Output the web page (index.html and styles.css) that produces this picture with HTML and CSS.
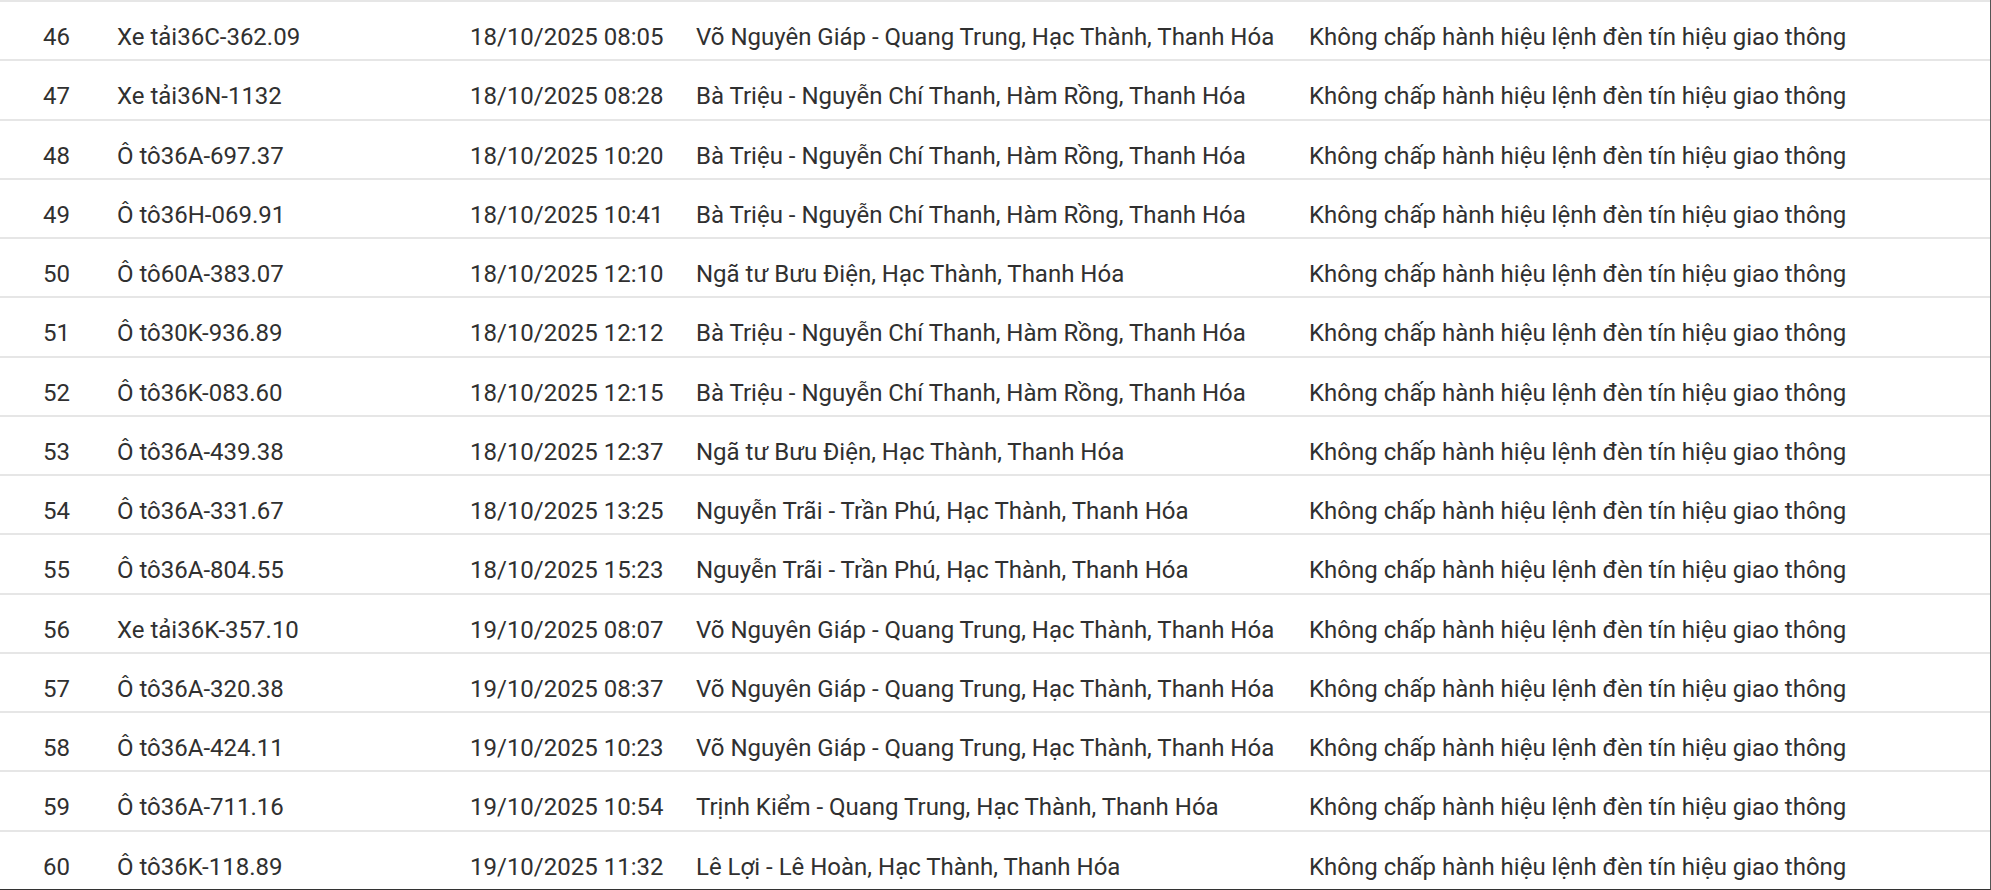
FILE: index.html
```html
<!DOCTYPE html>
<html lang="vi">
<head>
<meta charset="utf-8">
<link rel="stylesheet" href="styles.css">
</head>
<body>
<div class="table">
  <div class="row"><span>46</span><span>Xe tải36C-362.09</span><span>18/10/2025 08:05</span><span>Võ Nguyên Giáp - Quang Trung, Hạc Thành, Thanh Hóa</span><span>Không chấp hành hiệu lệnh đèn tín hiệu giao thông</span></div>
  <div class="row"><span>47</span><span>Xe tải36N-1132</span><span>18/10/2025 08:28</span><span>Bà Triệu - Nguyễn Chí Thanh, Hàm Rồng, Thanh Hóa</span><span>Không chấp hành hiệu lệnh đèn tín hiệu giao thông</span></div>
  <div class="row"><span>48</span><span>Ô tô36A-697.37</span><span>18/10/2025 10:20</span><span>Bà Triệu - Nguyễn Chí Thanh, Hàm Rồng, Thanh Hóa</span><span>Không chấp hành hiệu lệnh đèn tín hiệu giao thông</span></div>
  <div class="row"><span>49</span><span>Ô tô36H-069.91</span><span>18/10/2025 10:41</span><span>Bà Triệu - Nguyễn Chí Thanh, Hàm Rồng, Thanh Hóa</span><span>Không chấp hành hiệu lệnh đèn tín hiệu giao thông</span></div>
  <div class="row"><span>50</span><span>Ô tô60A-383.07</span><span>18/10/2025 12:10</span><span>Ngã tư Bưu Điện, Hạc Thành, Thanh Hóa</span><span>Không chấp hành hiệu lệnh đèn tín hiệu giao thông</span></div>
  <div class="row"><span>51</span><span>Ô tô30K-936.89</span><span>18/10/2025 12:12</span><span>Bà Triệu - Nguyễn Chí Thanh, Hàm Rồng, Thanh Hóa</span><span>Không chấp hành hiệu lệnh đèn tín hiệu giao thông</span></div>
  <div class="row"><span>52</span><span>Ô tô36K-083.60</span><span>18/10/2025 12:15</span><span>Bà Triệu - Nguyễn Chí Thanh, Hàm Rồng, Thanh Hóa</span><span>Không chấp hành hiệu lệnh đèn tín hiệu giao thông</span></div>
  <div class="row"><span>53</span><span>Ô tô36A-439.38</span><span>18/10/2025 12:37</span><span>Ngã tư Bưu Điện, Hạc Thành, Thanh Hóa</span><span>Không chấp hành hiệu lệnh đèn tín hiệu giao thông</span></div>
  <div class="row"><span>54</span><span>Ô tô36A-331.67</span><span>18/10/2025 13:25</span><span>Nguyễn Trãi - Trần Phú, Hạc Thành, Thanh Hóa</span><span>Không chấp hành hiệu lệnh đèn tín hiệu giao thông</span></div>
  <div class="row"><span>55</span><span>Ô tô36A-804.55</span><span>18/10/2025 15:23</span><span>Nguyễn Trãi - Trần Phú, Hạc Thành, Thanh Hóa</span><span>Không chấp hành hiệu lệnh đèn tín hiệu giao thông</span></div>
  <div class="row"><span>56</span><span>Xe tải36K-357.10</span><span>19/10/2025 08:07</span><span>Võ Nguyên Giáp - Quang Trung, Hạc Thành, Thanh Hóa</span><span>Không chấp hành hiệu lệnh đèn tín hiệu giao thông</span></div>
  <div class="row"><span>57</span><span>Ô tô36A-320.38</span><span>19/10/2025 08:37</span><span>Võ Nguyên Giáp - Quang Trung, Hạc Thành, Thanh Hóa</span><span>Không chấp hành hiệu lệnh đèn tín hiệu giao thông</span></div>
  <div class="row"><span>58</span><span>Ô tô36A-424.11</span><span>19/10/2025 10:23</span><span>Võ Nguyên Giáp - Quang Trung, Hạc Thành, Thanh Hóa</span><span>Không chấp hành hiệu lệnh đèn tín hiệu giao thông</span></div>
  <div class="row"><span>59</span><span>Ô tô36A-711.16</span><span>19/10/2025 10:54</span><span>Trịnh Kiểm - Quang Trung, Hạc Thành, Thanh Hóa</span><span>Không chấp hành hiệu lệnh đèn tín hiệu giao thông</span></div>
  <div class="row"><span>60</span><span>Ô tô36K-118.89</span><span>19/10/2025 11:32</span><span>Lê Lợi - Lê Hoàn, Hạc Thành, Thanh Hóa</span><span>Không chấp hành hiệu lệnh đèn tín hiệu giao thông</span></div>
</div>
</body>
</html>
```
FILE: styles.css
```css
html, body {
  margin: 0;
  padding: 0;
  background: #ffffff;
}
.table {
  width: 1991px;
  height: 890px;
  box-sizing: border-box;
  border-right: 1px solid #555555;
  border-bottom: 1px solid #333333;
  font-family: Roboto, "Noto Sans", sans-serif;
  font-size: 24px;
  color: #303030;
  overflow: hidden;
}
.row {
  display: grid;
  grid-template-columns: 74px 353px 226px 613px 1fr;
  height: 59.27px;
  box-sizing: border-box;
  border-top: 2px solid #e6e6e6;
  padding-left: 43px;
  padding-top: 22px;
  line-height: 26px;
  white-space: nowrap;
}
```
